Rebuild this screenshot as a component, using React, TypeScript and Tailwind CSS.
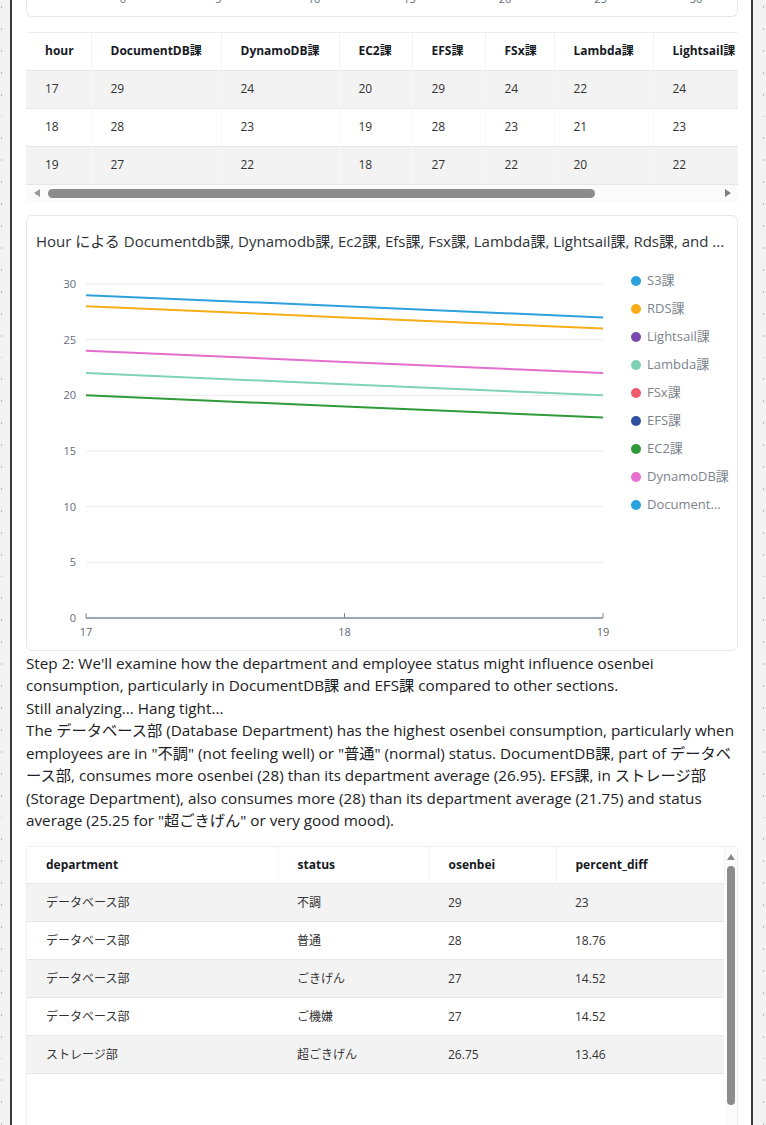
import React from "react";

// series shown in the line chart (only the visible ones are drawn)
type Series = { name: string; color: string; values: number[] };

const font = "font-['Open_Sans','Noto_Sans_CJK_JP',sans-serif]";

const hourCols = [
  { name: "hour", w: "w-[65px]" },
  { name: "DocumentDB課", w: "w-[130px]" },
  { name: "DynamoDB課", w: "w-[118px]" },
  { name: "EC2課", w: "w-[73px]" },
  { name: "EFS課", w: "w-[73px]" },
  { name: "FSx課", w: "w-[69px]" },
  { name: "Lambda課", w: "w-[99px]" },
  { name: "Lightsail課", w: "w-[100px]" },
  { name: "RDS課", w: "w-[80px]" },
  { name: "S3課", w: "w-[80px]" },
];

const hourRows = [
  ["17", "29", "24", "20", "29", "24", "22", "24", "28", "29"],
  ["18", "28", "23", "19", "28", "23", "21", "23", "27", "28"],
  ["19", "27", "22", "18", "27", "22", "20", "22", "26", "27"],
];

const deptCols = [
  { name: "department", w: "w-[251px]" },
  { name: "status", w: "w-[151px]" },
  { name: "osenbei", w: "w-[127px]" },
  { name: "percent_diff", w: "w-[168px]" },
];

const deptRows = [
  ["データベース部", "不調", "29", "23"],
  ["データベース部", "普通", "28", "18.76"],
  ["データベース部", "ごきげん", "27", "14.52"],
  ["データベース部", "ご機嫌", "27", "14.52"],
  ["ストレージ部", "超ごきげん", "26.75", "13.46"],
];

const lines: Series[] = [
  { name: "EC2課", color: "#2f9a38", values: [20, 19, 18] },
  { name: "Lambda課", color: "#7fd3b7", values: [22, 21, 20] },
  { name: "DynamoDB課", color: "#e46dcd", values: [24, 23, 22] },
  { name: "RDS課", color: "#f9ad19", values: [28, 27, 26] },
  { name: "S3課", color: "#2ea0dd", values: [29, 28, 27] },
];

const legend = [
  { name: "S3課", color: "#2d9fdd" },
  { name: "RDS課", color: "#f9ad18" },
  { name: "Lightsail課", color: "#7a4ab0" },
  { name: "Lambda課", color: "#7fd1b6" },
  { name: "FSx課", color: "#f35b6b" },
  { name: "EFS課", color: "#2e4f9f" },
  { name: "EC2課", color: "#31983a" },
  { name: "DynamoDB課", color: "#e670d1" },
  { name: "DocumentDB課", color: "#29a3de" },
];

function Gutter({ side }: { side: "left" | "right" }) {
  return (
    <div
      className={
        side === "left"
          ? "flex w-[10px] flex-col gap-[20px] bg-[#f3f3f3] pl-[1px] pt-[6px]"
          : "flex w-[13px] flex-col gap-[20px] bg-[#f3f3f3] pl-[10px] pt-[6px]"
      }
    >
      {Array.from({ length: 52 }).map((_, i) => (
        <span key={i} className="block h-[2px] w-[1px] bg-[#b9b9b9]" />
      ))}
    </div>
  );
}

function TopAxisCard() {
  const ticks = [0, 5, 10, 15, 20, 25, 30];
  return (
    <div className="h-[17px] overflow-hidden rounded-b-[6px] border-x border-b border-[#e6e8ea]">
      <svg width="710" height="16">
        {ticks.map((t, i) => (
          <text
            key={t}
            x={96 + i * 95.5}
            y={3}
            textAnchor="middle"
            fontSize="11"
            fill="#5f6b7a"
          >
            {t}
          </text>
        ))}
      </svg>
    </div>
  );
}

function HourTable() {
  return (
    <div className="mt-[15px]">
      <div className="overflow-hidden border-t border-[#eeeeee]">
        <table className="w-[887px] table-fixed border-collapse text-left text-[12px]">
          <colgroup>
            {hourCols.map((c) => (
              <col key={c.name} className={c.w} />
            ))}
          </colgroup>
          <thead>
            <tr className="h-[37px] border-b border-[#e8e8e8] bg-white">
              {hourCols.map((c) => (
                <th
                  key={c.name}
                  className="overflow-hidden whitespace-nowrap border-r border-[#f3f3f3] px-[19px] font-bold text-[#16191f]"
                >
                  {c.name}
                </th>
              ))}
            </tr>
          </thead>
          <tbody>
            {hourRows.map((r, i) => (
              <tr
                key={r[0]}
                className={
                  i % 2 === 0
                    ? "h-[38px] border-b border-[#e6e6e6] bg-[#f3f3f3]"
                    : "h-[38px] border-b border-[#e6e6e6] bg-white"
                }
              >
                {r.map((v, j) => (
                  <td key={j} className="border-r border-[#f8f8f8] px-[19px] text-[#333]">
                    {v}
                  </td>
                ))}
              </tr>
            ))}
          </tbody>
        </table>
      </div>
      {/* horizontal scrollbar */}
      <div className="flex h-[17px] items-center bg-[#fbfbfb] pl-[8px] pr-[7px]">
        <span className="h-0 w-0 border-y-[4px] border-r-[6px] border-y-transparent border-r-[#9a9a9a]" />
        <div className="ml-[8px] flex-1">
          <div className="h-[9px] w-[547px] rounded-full bg-[#8c8c8c]" />
        </div>
        <span className="h-0 w-0 border-y-[4px] border-l-[6px] border-y-transparent border-l-[#7e7e7e]" />
      </div>
    </div>
  );
}

function LineChart() {
  const x0 = 50;
  const x1 = 567;
  const y = (v: number) => 348 - v * (334 / 30);
  const xs = [x0, (x0 + x1) / 2, x1];
  return (
    <svg width="584" height="380">
      {[5, 10, 15, 20, 25, 30].map((v) => (
        <line key={v} x1={x0} x2={x1} y1={y(v)} y2={y(v)} stroke="#e9ebed" strokeWidth="1" />
      ))}
      {[0, 5, 10, 15, 20, 25, 30].map((v) => (
        <text key={v} x={40} y={y(v) + 4} textAnchor="end" fontSize="11" fill="#5f6b7a">
          {v}
        </text>
      ))}
      {lines.map((s) => (
        <polyline
          key={s.name}
          points={s.values.map((v, i) => `${xs[i]},${y(v)}`).join(" ")}
          fill="none"
          stroke={s.color}
          strokeWidth="2"
        />
      ))}
      <line x1={x0} x2={x1} y1={348} y2={348} stroke="#7d8998" strokeWidth="1.5" />
      {xs.map((x, i) => (
        <g key={i}>
          <line x1={x} x2={x} y1={343} y2={348} stroke="#7d8998" strokeWidth="1" />
          <text x={x} y={366} textAnchor="middle" fontSize="11" fill="#5f6b7a">
            {17 + i}
          </text>
        </g>
      ))}
    </svg>
  );
}

function ChartCard() {
  return (
    <div className="mt-[13px] h-[436px] rounded-[6px] border border-[#e6e8ea] bg-white">
      <div className="truncate px-[9px] pt-[15px] text-[15px] leading-[20px] text-[#2f3337]">
        Hour による Documentdb課, Dynamodb課, Ec2課, Efs課, Fsx課, Lambda課, Lightsail課, Rds課, and ...
      </div>
      <div className="mt-[19px] flex pl-[9px]">
        <LineChart />
        <ul className="ml-[11px] flex flex-col gap-[6px]">
          {legend.map((l) => (
            <li key={l.name} className="flex h-[22px] items-center gap-[6px]">
              <span className="h-[10px] w-[10px] shrink-0 rounded-full" style={{ backgroundColor: l.color }} />
              <span className="max-w-[82px] truncate text-[13px] text-[#7b838c]">{l.name}</span>
            </li>
          ))}
        </ul>
      </div>
    </div>
  );
}

function Analysis() {
  // line breaks follow the chat bubble's wrapping
  return (
    <div className="mt-px whitespace-nowrap text-[15.25px] leading-[22.5px] text-[#1d2125]">
      <p>
        Step 2: We'll examine how the department and employee status might influence osenbei
        <br />
        consumption, particularly in DocumentDB課 and EFS課 compared to other sections.
      </p>
      <p>Still analyzing... Hang tight...</p>
      <p>
        The データベース部 (Database Department) has the highest osenbei consumption, particularly when
        <br />
        employees are in "不調" (not feeling well) or "普通" (normal) status. DocumentDB課, part of データベ
        <br />
        ース部, consumes more osenbei (28) than its department average (26.95). EFS課, in ストレージ部
        <br />
        (Storage Department), also consumes more (28) than its department average (21.75) and status
        <br />
        average (25.25 for "超ごきげん" or very good mood).
      </p>
    </div>
  );
}

function DeptTable() {
  return (
    <div className="mt-[14px] flex h-[300px] rounded-t-[4px] border-x border-t border-[#eceeef]">
      <table className="h-fit w-[697px] table-fixed border-collapse text-left text-[12px]">
        <colgroup>
          {deptCols.map((c) => (
            <col key={c.name} className={c.w} />
          ))}
        </colgroup>
        <thead>
          <tr className="h-[37px] border-b border-[#e8e8e8] bg-white">
            {deptCols.map((c) => (
              <th
                key={c.name}
                className="whitespace-nowrap border-r border-[#f3f3f3] px-[19px] font-bold text-[#16191f]"
              >
                {c.name}
              </th>
            ))}
          </tr>
        </thead>
        <tbody>
          {deptRows.map((r, i) => (
            <tr
              key={i}
              className={
                i % 2 === 0
                  ? "h-[38px] border-b border-[#e6e6e6] bg-[#f3f3f3]"
                  : "h-[38px] border-b border-[#e6e6e6] bg-white"
              }
            >
              {r.map((v, j) => (
                <td key={j} className="px-[19px] text-[#333]">
                  {v}
                </td>
              ))}
            </tr>
          ))}
        </tbody>
      </table>
      {/* vertical scrollbar */}
      <div className="flex w-[14px] flex-col items-center bg-[#fbfbfb] pt-[7px]">
        <span className="h-0 w-0 border-x-[4px] border-b-[6px] border-x-transparent border-b-[#8a8a8a]" />
        <div className="mt-[6px] h-[239px] w-[8px] rounded-full bg-[#8c8c8c]" />
      </div>
    </div>
  );
}

export default function App() {
  return (
    <div className={`flex h-[1125px] w-[766px] overflow-hidden bg-white ${font}`}>
      <Gutter side="left" />
      <div className="w-[2px] bg-[#3a3a3a]" />
      <main className="w-[739px] pl-[14px] pr-[13px]">
        <TopAxisCard />
        <HourTable />
        <ChartCard />
        <Analysis />
        <DeptTable />
      </main>
      <div className="w-[2px] bg-[#3a3a3a]" />
      <Gutter side="right" />
    </div>
  );
}
